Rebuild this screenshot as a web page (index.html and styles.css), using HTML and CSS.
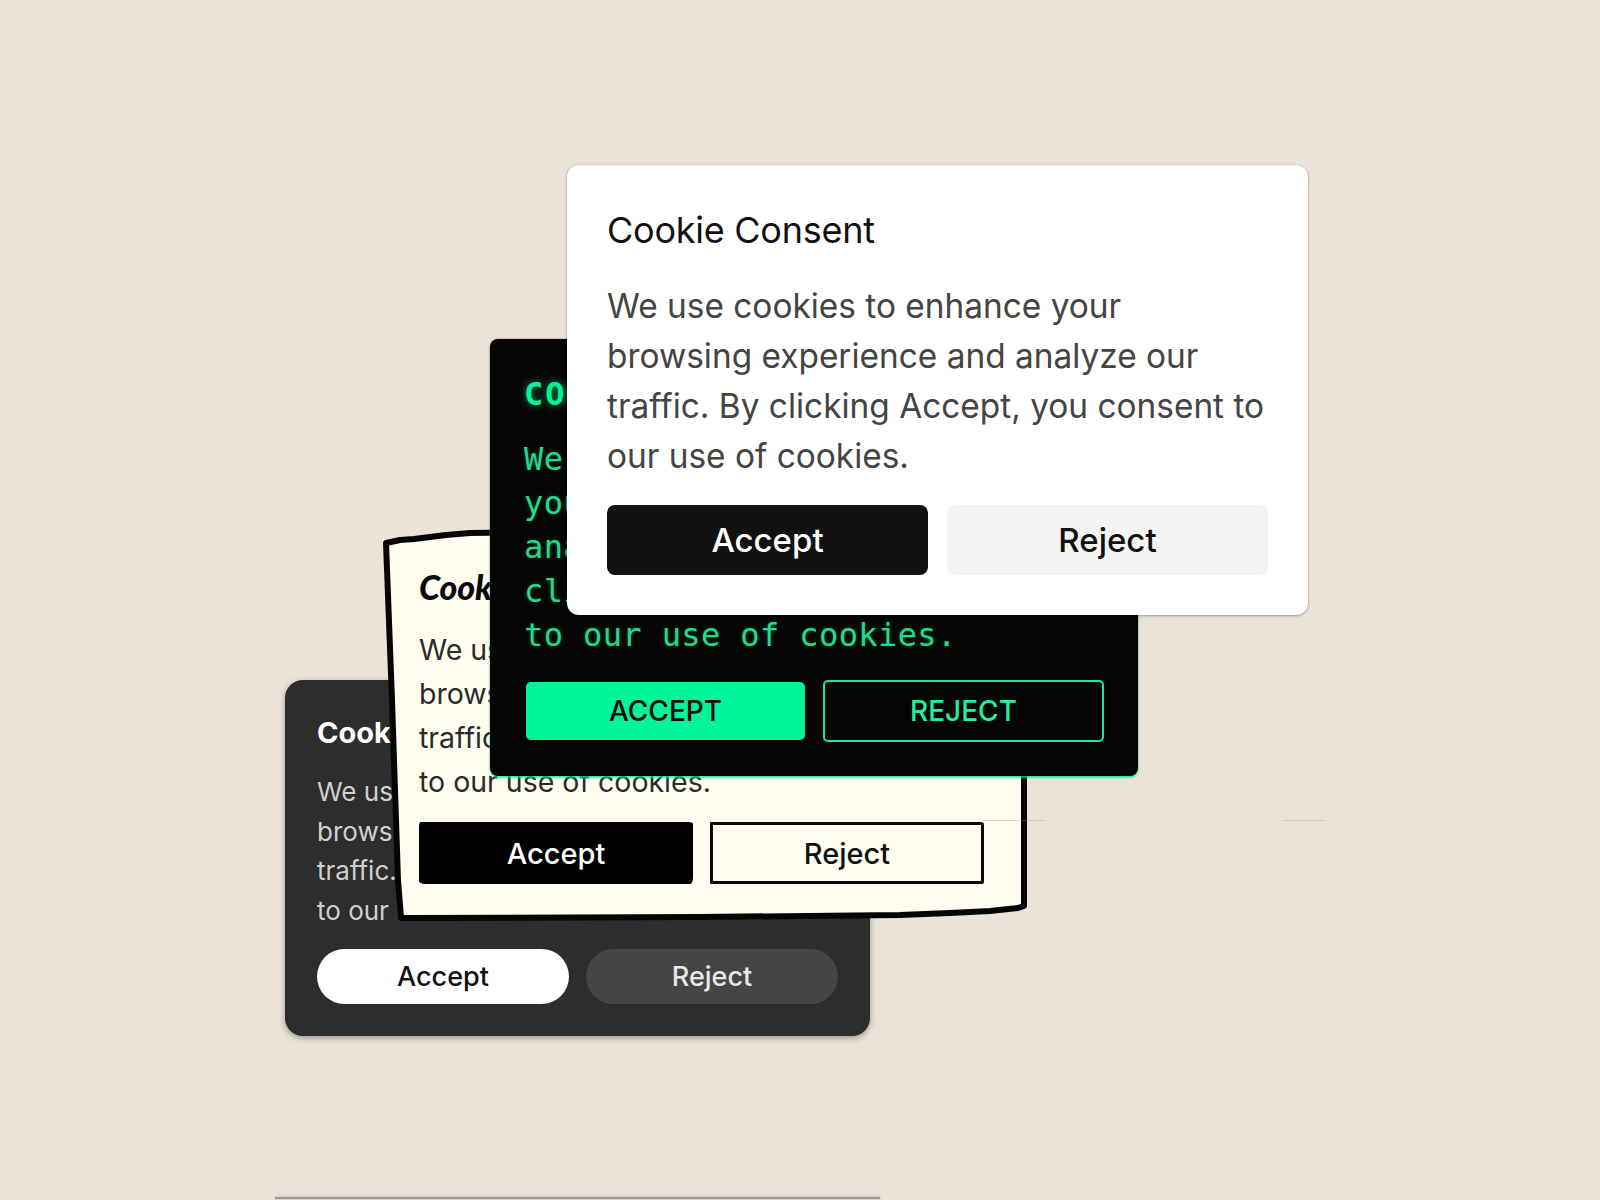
FILE: index.html
```html
<!DOCTYPE html>
<html lang="en">
<head>
<meta charset="utf-8">
<title>Cookie Consent Styles</title>
<link rel="stylesheet" href="styles.css">
</head>
<body>
<main class="stage">
  <div class="peek-card"></div>

  <section class="card card-dark">
    <h2 class="dark-title">Cookie Consent</h2>
    <p class="dark-text">We use cookies to enhance your<br>browsing experience and analyze<br>traffic. By clicking Accept, you consent<br>to our use of cookies.</p>
    <div class="btn-row dark-row">
      <button class="btn dark-accept">Accept</button>
      <button class="btn dark-reject">Reject</button>
    </div>
  </section>

  <section class="card card-sketch">
    <svg class="sketch-frame" viewBox="0 0 644 392" width="644" height="392" aria-hidden="true">
      <path d="M2,15 L16,12 L30,11 L46,9 L62,7 L86,5 L300,2 L639,4 L640,200 L640,378 L634,380 L606,383 L566,385 L516,387 L316,389 L17,390 L14,352 L8,172 Z" fill="#fffdf0" stroke="#050505" stroke-width="6" stroke-linejoin="round"/>
    </svg>
    <h2 class="sketch-title">Cookie Consent</h2>
    <p class="sketch-text">We use cookies to enhance your<br>browsing experience and analyze our<br>traffic. By clicking Accept, you consent<br>to our use of cookies.</p>
    <div class="btn-row sketch-row">
      <button class="btn sketch-accept">Accept</button>
      <button class="btn sketch-reject">Reject</button>
    </div>
  </section>

  <div class="edge-line edge-a"></div>
  <div class="edge-line edge-b"></div>

  <section class="card card-term">
    <h2 class="term-title">COOKIE CONSENT</h2>
    <p class="term-text">We use cookies to enhance your browsing experience and analyze our traffic. By clicking Accept, you consent to our use of cookies.</p>
    <div class="btn-row term-row">
      <button class="btn term-accept">Accept</button>
      <button class="btn term-reject">Reject</button>
    </div>
  </section>

  <section class="card card-light">
    <h2 class="light-title">Cookie Consent</h2>
    <p class="light-text">We use cookies to enhance your<br>browsing experience and analyze our<br>traffic. By clicking Accept, you consent to<br>our use of cookies.</p>
    <div class="btn-row light-row">
      <button class="btn light-accept">Accept</button>
      <button class="btn light-reject">Reject</button>
    </div>
  </section>
</main>
</body>
</html>
```

FILE: styles.css
```css
* { box-sizing: border-box; margin: 0; padding: 0; }

html, body { width: 1600px; height: 1200px; overflow: hidden; }

body {
  background: #ece3d8;
  font-family: Inter, "Liberation Sans", sans-serif;
}

.stage {
  position: relative;
  width: 1600px;
  height: 1200px;
  overflow: hidden;
}

.card { position: absolute; }

.btn {
  font: inherit;
  border: 0;
  display: flex;
  align-items: center;
  justify-content: center;
  cursor: pointer;
}

.btn-row {
  display: grid;
  grid-template-columns: 1fr 1fr;
  align-items: center;
}

/* ---------- light card ---------- */
.card-light {
  left: 567px;
  top: 165px;
  width: 741px;
  padding: 40px;
  background: #fff;
  border-radius: 12px;
  box-shadow: 0 1px 3px rgba(0, 0, 0, 0.28), 0 0 0 1px rgba(0, 0, 0, 0.05);
  z-index: 5;
}

.light-title {
  font-size: 36px;
  font-weight: 400;
  line-height: 50px;
  color: #111;
  letter-spacing: -0.25px;
  margin-bottom: 26px;
}

.light-text {
  font-size: 33.4px;
  line-height: 50px;
  color: #444;
  white-space: nowrap;
  margin-bottom: 24px;
}

.light-row { gap: 19px; }

.light-row .btn {
  height: 70px;
  border-radius: 8px;
  font-size: 33px;
  font-weight: 500;
}

.light-accept { background: #111; color: #fff; }
.light-reject { background: #f4f4f4; color: #111; }

/* ---------- terminal card ---------- */
.card-term {
  left: 490px;
  top: 339px;
  width: 648px;
  height: 437px;
  padding: 34px 34px 36px;
  background: #050505;
  border-radius: 8px;
  box-shadow: 0 2px 2px rgba(0, 240, 150, 0.75), 0 0 2px rgba(0, 0, 0, 0.4);
  z-index: 4;
  font-family: "DejaVu Sans Mono", "Liberation Mono", monospace;
}

.term-title {
  font-size: 32px;
  font-weight: 700;
  line-height: 42px;
  color: #00f59b;
  letter-spacing: 2px;
  text-shadow: 0 0 8px rgba(0, 255, 160, 0.55);
  margin-bottom: 22px;
}

.term-text {
  font-size: 32px;
  line-height: 44px;
  letter-spacing: 0.4px;
  color: #22d98d;
  text-shadow: 0 0 4px rgba(0, 255, 160, 0.25);
  margin-bottom: 23px;
}

.term-row { gap: 18px; height: 62px; }

.term-row .btn {
  font-family: Inter, "Liberation Sans", sans-serif;
  font-size: 28px;
  font-weight: 500;
  text-transform: uppercase;
  border-radius: 5px;
}

.term-accept {
  height: 58px;
  margin-left: 2px;
  background: #00f59b;
  color: #0a0a0a;
}

.term-reject {
  height: 62px;
  background: #050505;
  color: #1ff0a0;
  border: 2px solid #1ee69b;
}

/* ---------- sketch card ---------- */
.card-sketch {
  left: 384px;
  top: 528px;
  width: 644px;
  height: 392px;
  padding: 39px 44px 36px 35px;
  z-index: 2;
}

.sketch-frame {
  position: absolute;
  left: 0;
  top: 0;
  overflow: visible;
  z-index: 0;
}

.sketch-title,
.sketch-text,
.sketch-row { position: relative; z-index: 1; }

.sketch-title {
  font-family: Lato, "DejaVu Sans", sans-serif;
  font-style: italic;
  font-weight: 900;
  font-size: 34px;
  line-height: 40px;
  color: #0a0a0a;
  margin-bottom: 21px;
}

.sketch-text {
  font-size: 28.5px;
  line-height: 44px;
  color: #2b2b2b;
  white-space: nowrap;
  margin-bottom: 18px;
}

.sketch-row { gap: 17px; }

.sketch-row .btn {
  height: 62px;
  font-size: 29px;
  font-weight: 500;
}

.sketch-accept {
  background: #000;
  color: #fff;
  border-radius: 2px 5px 3px 6px / 5px 2px 6px 3px;
}

.sketch-reject {
  background: #fffdf0;
  color: #111;
  border: 3px solid #0a0a0a;
  border-radius: 1px 3px 2px 1px;
}

/* ---------- dark card ---------- */
.card-dark {
  left: 285px;
  top: 680px;
  width: 585px;
  padding: 32px;
  background: #2d2d2d;
  border-radius: 18px;
  box-shadow: 0 2px 6px rgba(0, 0, 0, 0.35);
  z-index: 1;
  color: #fff;
}

.dark-title {
  font-size: 29px;
  font-weight: 700;
  line-height: 42px;
  margin-bottom: 18px;
}

.dark-text {
  font-size: 26px;
  line-height: 39.5px;
  color: #d0d0d0;
  white-space: nowrap;
  margin-bottom: 19px;
}

.dark-row { gap: 17px; }

.dark-row .btn {
  height: 55px;
  border-radius: 28px;
  font-size: 27px;
  font-weight: 500;
}

.dark-accept { background: #fff; color: #111; }
.dark-reject { background: #454545; color: #e8e8e8; }

/* ---------- stray edges ---------- */
.edge-line {
  position: absolute;
  top: 820px;
  height: 1px;
  background: rgba(150, 140, 130, 0.35);
  z-index: 3;
}

.edge-a { left: 983px; width: 62px; }
.edge-b { left: 1283px; width: 42px; }

.peek-card {
  position: absolute;
  left: 275px;
  top: 1197px;
  width: 605px;
  height: 10px;
  background: #d9d1c7;
  border-top: 2px solid #a19c95;
  box-shadow: 0 -1px 3px rgba(0, 0, 0, 0.12);
}
```
